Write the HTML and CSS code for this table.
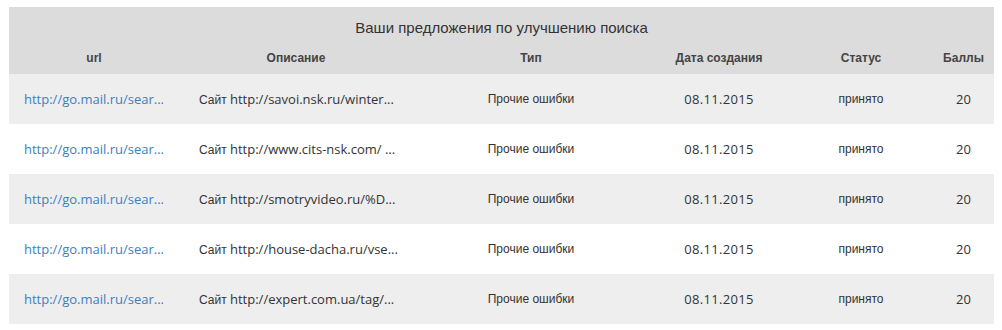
FILE: index.html
```html
<!DOCTYPE html>
<html lang="ru">
<head>
<meta charset="utf-8">
<link rel="stylesheet" href="styles.css">
</head>
<body>
<table class="tbl">
  <colgroup>
    <col class="c-url"><col class="c-desc"><col class="c-type"><col class="c-date"><col class="c-status"><col class="c-score">
  </colgroup>
  <thead>
    <tr class="title-row"><th colspan="6">Ваши предложения по улучшению поиска</th></tr>
    <tr class="head-row">
      <th>url</th><th>Описание</th><th>Тип</th><th>Дата создания</th><th>Статус</th><th>Баллы</th>
    </tr>
  </thead>
  <tbody>
    <tr>
      <td class="url"><a class="lat" href="#">http://go.mail.ru/sear...</a></td>
      <td class="desc">Сайт <span class="lat">http://savoi.nsk.ru/winter...</span></td>
      <td>Прочие ошибки</td><td class="lat date">08.11.2015</td><td>принято</td><td class="lat">20</td>
    </tr>
    <tr>
      <td class="url"><a class="lat" href="#">http://go.mail.ru/sear...</a></td>
      <td class="desc">Сайт <span class="lat">http://www.cits-nsk.com/ ...</span></td>
      <td>Прочие ошибки</td><td class="lat date">08.11.2015</td><td>принято</td><td class="lat">20</td>
    </tr>
    <tr>
      <td class="url"><a class="lat" href="#">http://go.mail.ru/sear...</a></td>
      <td class="desc">Сайт <span class="lat">http://smotryvideo.ru/%D...</span></td>
      <td>Прочие ошибки</td><td class="lat date">08.11.2015</td><td>принято</td><td class="lat">20</td>
    </tr>
    <tr>
      <td class="url"><a class="lat" href="#">http://go.mail.ru/sear...</a></td>
      <td class="desc">Сайт <span class="lat">http://house-dacha.ru/vse...</span></td>
      <td>Прочие ошибки</td><td class="lat date">08.11.2015</td><td>принято</td><td class="lat">20</td>
    </tr>
    <tr>
      <td class="url"><a class="lat" href="#">http://go.mail.ru/sear...</a></td>
      <td class="desc">Сайт <span class="lat">http://expert.com.ua/tag/...</span></td>
      <td>Прочие ошибки</td><td class="lat date">08.11.2015</td><td>принято</td><td class="lat">20</td>
    </tr>
  </tbody>
</table>
</body>
</html>
```
FILE: styles.css
```css
html, body { margin: 0; padding: 0; background: #fff; }
body { padding: 7px 8px 0 9px; font-family: "Liberation Sans", Arial, sans-serif; color: #333; }
.tbl { width: 985px; border-collapse: collapse; table-layout: fixed; font-size: 12px; }
.c-url { width: 170px; }
.c-desc { width: 234px; }
.c-type { width: 236px; }
.c-date { width: 140px; }
.c-status { width: 144px; }
.c-score { width: 61px; }
thead { background: #dcdcdc; }
.title-row th { height: 36px; padding: 2px 0 0; font-size: 15px; font-weight: normal; color: #333; vertical-align: middle; }
.head-row th { height: 26px; padding: 0 0 3px; font-size: 12px; font-weight: bold; color: #444; vertical-align: middle; }
tbody tr { height: 50px; }
tbody tr:nth-child(odd) { background: #eeeeee; }
td { height: 50px; padding: 0; text-align: center; vertical-align: middle; white-space: nowrap; overflow: hidden; color: #333; }
td.url { text-align: left; padding-left: 15px; }
td.desc { text-align: left; padding-left: 20px; }
.lat { font-family: "Open Sans", sans-serif; font-size: 13px; }
.date { letter-spacing: 0.3px; }
a { color: #3b80c3; text-decoration: none; }
```
